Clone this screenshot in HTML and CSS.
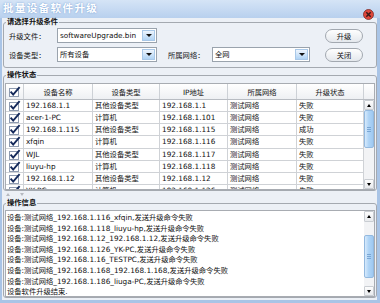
FILE: index.html
```html
<!DOCTYPE html>
<html lang="zh-CN">
<head>
    <meta charset="UTF-8">
    <title>批量设备软件升级</title>
    <link rel="stylesheet" href="styles.css">
</head>
<body>
    <svg width="0" height="0" class="defs">
        <symbol id="chk" viewBox="0 0 13 11">
            <rect x="1.5" y="2.5" width="9" height="8" fill="#fff" stroke="#8e9bb0"/>
            <path d="M2.6 5.6 L5.2 8.6 L11.6 1.2" fill="none" stroke="#14295a" stroke-width="1.9"/>
        </symbol>
    </svg>

    <div class="window">
        <div class="titlebar">
            <span class="title">批量设备软件升级</span>
            <svg class="close" viewBox="0 0 11 11">
                <circle cx="5.5" cy="5.5" r="5" fill="#e0473c" stroke="#7a2a24" stroke-width="0.8"/>
                <path d="M3.3 3.3 L7.7 7.7 M7.7 3.3 L3.3 7.7" stroke="#3a1a18" stroke-width="1.5"/>
            </svg>
        </div>

        <div class="client">
            <!-- 升级条件 -->
            <fieldset class="group">
                <legend>请选择升级条件</legend>
                <div class="cond">
                    <div class="fields">
                        <div class="field-row">
                            <span class="label">升级文件：</span>
                            <div class="combo combo-wide"><span class="combo-text">softwareUpgrade.bin</span><span class="drop"></span></div>
                        </div>
                        <div class="field-row second">
                            <span class="label">设备类型：</span>
                            <div class="combo combo-wide"><span class="combo-text">所有设备</span><span class="drop"></span></div>
                            <span class="label label-net">所属网络：</span>
                            <div class="combo combo-net"><span class="combo-text">全网</span><span class="drop"></span></div>
                        </div>
                    </div>
                    <div class="buttons">
                        <button class="btn">升级</button>
                        <button class="btn">关闭</button>
                    </div>
                </div>
            </fieldset>

            <!-- 操作状态 -->
            <fieldset class="group status">
                <legend>操作状态</legend>
                <div class="grid-wrap">
                    <div class="grid">
                        <div class="grid-head">
                            <div class="chk"><svg class="cb"><use href="#chk"/></svg></div>
                            <div>设备名称</div>
                            <div>设备类型</div>
                            <div>IP地址</div>
                            <div>所属网络</div>
                            <div>升级状态</div>
                            <div></div>
                        </div>
                        <div class="grid-body">
                            <div class="rows">
                                <div class="row"><div class="chk"><svg class="cb"><use href="#chk"/></svg></div><div>192.168.1.1</div><div>其他设备类型</div><div>192.168.1.1</div><div>测试网络</div><div>失败</div></div>
                                <div class="row"><div class="chk"><svg class="cb"><use href="#chk"/></svg></div><div>acer-1-PC</div><div>计算机</div><div>192.168.1.101</div><div>测试网络</div><div>失败</div></div>
                                <div class="row"><div class="chk"><svg class="cb"><use href="#chk"/></svg></div><div>192.168.1.115</div><div>其他设备类型</div><div>192.168.1.115</div><div>测试网络</div><div>成功</div></div>
                                <div class="row"><div class="chk"><svg class="cb"><use href="#chk"/></svg></div><div>xfqin</div><div>计算机</div><div>192.168.1.116</div><div>测试网络</div><div>失败</div></div>
                                <div class="row"><div class="chk"><svg class="cb"><use href="#chk"/></svg></div><div>WJL</div><div>其他设备类型</div><div>192.168.1.117</div><div>测试网络</div><div>失败</div></div>
                                <div class="row"><div class="chk"><svg class="cb"><use href="#chk"/></svg></div><div>liuyu-hp</div><div>计算机</div><div>192.168.1.118</div><div>测试网络</div><div>失败</div></div>
                                <div class="row"><div class="chk"><svg class="cb"><use href="#chk"/></svg></div><div>192.168.1.12</div><div>其他设备类型</div><div>192.168.1.12</div><div>测试网络</div><div>失败</div></div>
                                <div class="row"><div class="chk"><svg class="cb"><use href="#chk"/></svg></div><div>YK-PC</div><div>计算机</div><div>192.168.1.126</div><div>测试网络</div><div>失败</div></div>
                            </div>
                            <div class="vscroll">
                                <div class="sb-btn up"></div>
                                <div class="thumb grid-thumb"></div>
                                <div class="sb-fill"></div>
                                <div class="sb-btn down"></div>
                            </div>
                        </div>
                    </div>
                </div>
            </fieldset>

            <div class="splitter">
                <span class="arrow-up"></span>
                <span class="arrow-down"></span>
            </div>

            <!-- 操作信息 -->
            <fieldset class="group">
                <legend>操作信息</legend>
                <div class="log-wrap">
                    <div class="log">
                        <div class="log-text">
                            <div>设备:测试网络_192.168.1.116_xfqin,发送升级命令失败</div>
                            <div>设备:测试网络_192.168.1.118_liuyu-hp,发送升级命令失败</div>
                            <div>设备:测试网络_192.168.1.12_192.168.1.12,发送升级命令失败</div>
                            <div>设备:测试网络_192.168.1.126_YK-PC,发送升级命令失败</div>
                            <div>设备:测试网络_192.168.1.16_TESTPC,发送升级命令失败</div>
                            <div>设备:测试网络_192.168.1.168_192.168.1.168,发送升级命令失败</div>
                            <div>设备:测试网络_192.168.1.186_liuga-PC,发送升级命令失败</div>
                            <div>设备软件升级结束.</div>
                        </div>
                        <div class="vscroll">
                            <div class="sb-btn up log-up"></div>
                            <div class="sb-gap"></div>
                            <div class="thumb log-thumb"></div>
                            <div class="sb-fill"></div>
                            <div class="sb-btn down"></div>
                        </div>
                    </div>
                </div>
            </fieldset>
        </div>
    </div>
</body>
</html>
```

FILE: styles.css
```css
body {
    margin: 0;
    background: #ecf0f6;
}

.defs {
    display: block;
    height: 0;
}

.window {
    width: 380px;
    height: 303px;
    box-sizing: border-box;
    border: solid #a9c4e6;
    border-width: 0 3px 3px 2px;
    background: #ecf0f6;
    font-family: "DejaVu Sans", "Noto Sans CJK SC", sans-serif;
    font-size: 7.3px;
    color: #111;
}

/* 标题栏 */
.titlebar {
    height: 18px;
    margin: 0 -3px 0 -2px;
    padding: 0 6px 0 3px;
    display: flex;
    justify-content: space-between;
    align-items: flex-start;
    background: linear-gradient(#d5e4f6, #b8d0ee);
}

.title {
    color: #fff;
    font-size: 10.5px;
    font-weight: bold;
    letter-spacing: 1.4px;
    line-height: 16px;
    text-shadow: 0 0 2px #6b97d0;
}

.close {
    width: 11px;
    height: 11px;
    margin-top: 9px;
}

.client {
    padding: 0 0 2px 1px;
}

.group {
    margin: 0;
    padding: 0;
    min-width: 0;
    border: 1px solid #a4a9b0;
    border-radius: 3px;
}

.group legend {
    margin-left: 2px;
    padding: 0 1px;
    font-weight: bold;
    line-height: 8px;
}

/* 升级条件 */
.cond {
    display: flex;
    padding: 2px 13px 5px 5px;
}

.field-row {
    display: flex;
    align-items: center;
    height: 15px;
}

.field-row.second {
    margin-top: 4px;
}

.label {
    width: 48px;
}

.label-net {
    width: 44px;
    margin-left: 11px;
}

.combo {
    box-sizing: border-box;
    height: 15px;
    padding: 1px;
    display: flex;
    border: 1px solid #9aa3ad;
    background: #fff;
}

.combo-wide {
    width: 100px;
}

.combo-net {
    width: 98px;
}

.combo-text {
    flex: 1;
    line-height: 11px;
    padding-left: 1px;
    white-space: nowrap;
}

.drop {
    width: 13px;
    box-sizing: border-box;
    display: flex;
    align-items: center;
    justify-content: center;
    border: 1px solid #a9c8e8;
    background: linear-gradient(#eef5fd, #b0d3f4);
}

.drop::after {
    content: "";
    border-left: 3px solid transparent;
    border-right: 3px solid transparent;
    border-top: 3px solid #111;
}

.buttons {
    display: flex;
    flex-direction: column;
    gap: 5px;
    margin-left: 15px;
    padding-top: 1px;
}

.btn {
    width: 38px;
    height: 14px;
    padding: 0;
    border: 1px solid #a2a8b0;
    border-radius: 7px;
    background: linear-gradient(#fefefe, #e4e8ed);
    font: inherit;
    color: #111;
}

/* 操作状态 */
.status {
    margin-top: 3px;
}

.grid-wrap {
    padding: 4px 1px 0;
}

.grid {
    border: 1px solid #a8acb2;
    background: #fff;
}

.grid-head {
    display: grid;
    grid-template-columns: 18px 69px 67px 68px 69px 67px 1fr;
    height: 16px;
    box-sizing: border-box;
    border-bottom: 1px solid #b8bcc2;
    background: linear-gradient(#fff, #eef0f3);
}

.grid-head > div {
    display: flex;
    align-items: center;
    justify-content: center;
    border-right: 1px solid #cdd1d6;
}

.grid-head > div:last-child {
    border-right: 0;
}

.grid-body {
    display: flex;
    height: 89px;
}

.rows {
    flex: 1;
    overflow: hidden;
}

.row {
    display: grid;
    grid-template-columns: 18px 69px 67px 68px 69px 67px;
    height: 12.15px;
    box-sizing: border-box;
    border-bottom: 1px solid #cfd2d6;
}

.row > div {
    padding-left: 2px;
    line-height: 11px;
    white-space: nowrap;
    overflow: hidden;
    border-right: 1px solid #cfd2d6;
}

.grid-head .chk,
.row > .chk {
    padding: 0;
    display: flex;
    align-items: center;
    justify-content: center;
}

.cb {
    width: 13px;
    height: 11px;
}

/* 滚动条 */
.vscroll {
    width: 10px;
    display: flex;
    flex-direction: column;
    background: #f2f3f5;
}

.sb-btn {
    height: 10px;
    flex: none;
    box-sizing: border-box;
    display: flex;
    align-items: center;
    justify-content: center;
    border: 1px solid #c9cdd2;
    border-radius: 1px;
    background: linear-gradient(#fdfdfd, #e8eaed);
}

.sb-btn::after {
    content: "";
    border-left: 2.5px solid transparent;
    border-right: 2.5px solid transparent;
}

.sb-btn.up::after {
    border-bottom: 3px solid #000;
}

.sb-btn.down::after {
    border-top: 3px solid #000;
}

.log-up {
    height: 11px;
}

.thumb {
    flex: none;
    box-sizing: border-box;
    display: flex;
    align-items: center;
    justify-content: center;
    border: 1px solid #93b9df;
    border-radius: 2px;
    background: linear-gradient(to right, #d7eafc, #afd4f6 45%, #9ec8f1);
}

.thumb::after {
    content: "";
    width: 4px;
    height: 5px;
    background: repeating-linear-gradient(#7aa6d4 0 1px, transparent 1px 2px);
}

.grid-thumb {
    height: 38px;
}

.log-thumb {
    height: 43px;
}

.sb-gap {
    height: 13px;
    flex: none;
}

.sb-fill {
    flex: 1;
}

/* 分隔条 */
.splitter {
    height: 8px;
    box-sizing: border-box;
    display: flex;
    gap: 10px;
    padding: 2px 0 0 3px;
}

.arrow-up,
.arrow-down {
    width: 0;
    height: 0;
    border-left: 2px solid transparent;
    border-right: 2px solid transparent;
}

.arrow-up {
    border-bottom: 3px solid #b6bac0;
}

.arrow-down {
    border-top: 3px solid #b6bac0;
}

/* 操作信息 */
.log-wrap {
    padding: 3px 1px 0;
}

.log {
    height: 87px;
    box-sizing: border-box;
    display: flex;
    border: 1px solid #a8acb2;
    background: #fff;
}

.log-text {
    flex: 1;
    padding: 2px 0 0 1px;
    line-height: 10.6px;
    white-space: nowrap;
    overflow: hidden;
}
```
